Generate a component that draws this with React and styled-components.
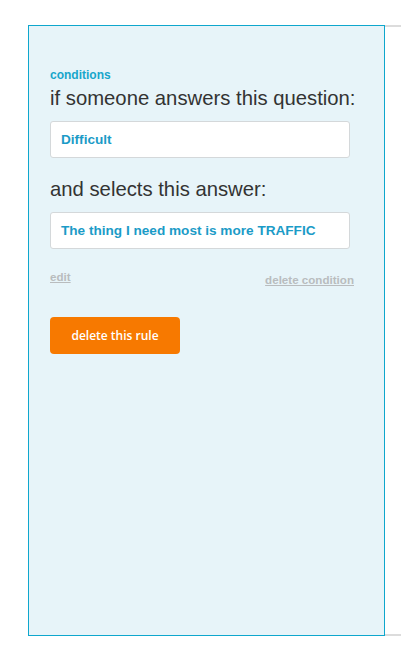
import styled, { createGlobalStyle } from "styled-components";

const GlobalStyle = createGlobalStyle`
  html, body {
    margin: 0;
    padding: 0;
    background: #fff;
    font-family: "Liberation Sans", Arial, sans-serif;
  }
`;

const Page = styled.div`
  display: flex;
  padding: 25px 0 0 28px;
`;

const Panel = styled.div`
  box-sizing: border-box;
  width: 357px;
  height: 611px;
  border: 1px solid #0ea7cd;
  background-color: #e7f4f9;
  padding: 42px 34px 0 21px;
  display: flex;
  flex-direction: column;
`;

const Side = styled.div`
  flex: 1;
  height: 611px;
  box-sizing: border-box;
  border-top: 2px solid #dcdcdc;
  border-bottom: 2px solid #dcdcdc;
`;

const Label = styled.div`
  font-size: 12px;
  line-height: 14px;
  font-weight: 700;
  color: #18a6cb;
`;

const Heading = styled.div`
  margin-top: ${(p) => p.$top}px;
  font-size: 20.3px;
  line-height: 24px;
  color: #333;
  white-space: nowrap;
`;

const Field = styled.div`
  box-sizing: border-box;
  margin-top: 11px;
  height: 37px;
  display: flex;
  align-items: center;
  padding: 0 10px;
  background: #fff;
  border: 1px solid #d4d8da;
  border-radius: 3px;
  font-size: 13.6px;
  font-weight: 700;
  color: #1b9bc7;
`;

const Links = styled.div`
  margin-top: 21px;
  margin-right: -4px;
  display: flex;
  justify-content: space-between;
  align-items: flex-start;
`;

const TextLink = styled.a`
  font-size: 11.6px;
  line-height: 14px;
  font-weight: 700;
  color: #b9bcbe;
  text-decoration: underline;
  margin-top: ${(p) => p.$top || 0}px;
  cursor: pointer;
`;

const Button = styled.button`
  margin-top: 30px;
  width: 130px;
  height: 37px;
  border: none;
  border-radius: 4px;
  background-color: #f77900;
  color: #fff;
  font-family: "Open Sans", sans-serif;
  font-size: 12px;
  font-weight: 600;
  cursor: pointer;
  align-self: flex-start;
`;

export default function App() {
  return (
    <>
      <GlobalStyle />
      <Page>
        <Panel>
          <Label>conditions</Label>
          <Heading $top={4}>if someone answers this question:</Heading>
          <Field>Difficult</Field>
          <Heading $top={19}>and selects this answer:</Heading>
          <Field>The thing I need most is more TRAFFIC</Field>
          <Links>
            <TextLink>edit</TextLink>
            <TextLink $top={3}>delete condition</TextLink>
          </Links>
          <Button>delete this rule</Button>
        </Panel>
        <Side />
      </Page>
    </>
  );
}
